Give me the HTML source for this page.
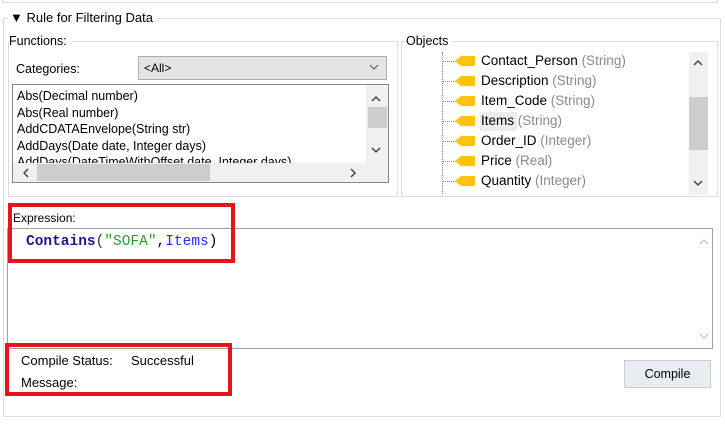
<!DOCTYPE html>
<html><head><style>
*{margin:0;padding:0;box-sizing:border-box}
body{width:725px;height:428px;background:#fff;position:relative;overflow:hidden;font-family:"Liberation Sans",sans-serif;font-size:12px;color:#000}
.a{position:absolute}
.t{position:absolute;white-space:nowrap;line-height:14px}
.g{color:#8a8a8a}
</style></head><body>
<div class="a" style="left:2px;top:-2px;width:716px;height:5px;border:1px solid #dcdcdc;border-top:none"></div>
<div class="a" style="left:3px;top:18px;width:718px;height:399px;border:1px solid #dcdcdc"></div>
<div class="t" style="left:8px;top:11px;background:#fff;padding:0 4px 0 2px;font-size:13px">▼ Rule for Filtering Data</div>

<div class="a" style="left:8px;top:41px;width:390px;height:156px;border:1px solid #dcdcdc"></div>
<div class="t" style="left:9px;top:34px;background:#fff;padding-right:4px;font-size:12.5px">Functions:</div>
<div class="t" style="left:16px;top:62px;font-size:12.5px">Categories:</div>
<div class="a" style="left:138px;top:56px;width:249px;height:24px;background:#e5e5e5;border:1px solid #adadad"></div>
<div class="t" style="left:144px;top:61px">&lt;All&gt;</div>
<svg class="a" style="left:369px;top:64px" width="10" height="7"><path d="M1 1l4 4 4-4" stroke="#555" fill="none"/></svg>
<div class="a" style="left:12px;top:84px;width:377px;height:99px;border:1px solid #828790;overflow:hidden">
<div class="t" style="left:4px;top:3px;line-height:16.5px;font-size:12.5px">Abs(Decimal number)<br>Abs(Real number)<br>AddCDATAEnvelope(String str)<br>AddDays(Date date, Integer days)<br>AddDays(DateTimeWithOffset date, Integer days)</div>
<div class="a" style="left:353px;top:0;width:22px;height:78px;background:#f0f0f0"></div>
<div class="a" style="left:355px;top:22px;width:19px;height:21px;background:#cdcdcd"></div>
<div class="a" style="left:0;top:78px;width:375px;height:19px;background:#f0f0f0"></div>
<div class="a" style="left:24px;top:79px;width:173px;height:17px;background:#cdcdcd"></div>
</div>
<svg class="a" style="left:371px;top:95px" width="10" height="7"><path d="M1 6l4-4 4 4" stroke="#444" stroke-width="1.5" fill="none"/></svg>
<svg class="a" style="left:371px;top:147px" width="10" height="7"><path d="M1 1l4 4 4-4" stroke="#444" stroke-width="1.5" fill="none"/></svg>
<svg class="a" style="left:22px;top:168px" width="7" height="10"><path d="M6 1l-4 4 4 4" stroke="#444" stroke-width="1.5" fill="none"/></svg>
<svg class="a" style="left:350px;top:168px" width="7" height="10"><path d="M1 1l4 4-4 4" stroke="#444" stroke-width="1.5" fill="none"/></svg>

<div class="a" style="left:401px;top:41px;width:317px;height:156px;border:1px solid #dcdcdc"></div>
<div class="t" style="left:406px;top:34px;background:#fff;padding-right:4px;font-size:12.5px">Objects</div>
<div class="a" style="left:442px;top:52px;height:142px;border-left:1px dotted #888"></div>
<div class="a" style="left:689px;top:52px;width:19px;height:143px;background:#f0f0f0"></div>
<div class="a" style="left:689px;top:97px;width:19px;height:53px;background:#cdcdcd"></div>
<svg class="a" style="left:693px;top:59px" width="10" height="7"><path d="M1 6l4-4 4 4" stroke="#444" stroke-width="1.5" fill="none"/></svg>
<svg class="a" style="left:693px;top:180px" width="10" height="7"><path d="M1 1l4 4 4-4" stroke="#444" stroke-width="1.5" fill="none"/></svg>
<div class="a" style="left:480px;top:112px;width:37px;height:19px;background:#ececec"></div>
<div class="a" style="left:443px;top:61px;width:13px;border-top:1px dotted #888"></div>
<div class="a" style="left:443px;top:81px;width:13px;border-top:1px dotted #888"></div>
<div class="a" style="left:443px;top:101px;width:13px;border-top:1px dotted #888"></div>
<div class="a" style="left:443px;top:121px;width:13px;border-top:1px dotted #888"></div>
<div class="a" style="left:443px;top:141px;width:13px;border-top:1px dotted #888"></div>
<div class="a" style="left:443px;top:161px;width:13px;border-top:1px dotted #888"></div>
<div class="a" style="left:443px;top:181px;width:13px;border-top:1px dotted #888"></div>
<svg class="a" style="left:455px;top:55px" width="22" height="140"><g fill="#ffc20e">
<path d="M0 6l6-5h14v10H6z"/><path d="M0 26l6-5h14v10H6z"/><path d="M0 46l6-5h14v10H6z"/><path d="M0 66l6-5h14v10H6z"/><path d="M0 86l6-5h14v10H6z"/><path d="M0 106l6-5h14v10H6z"/><path d="M0 126l6-5h14v10H6z"/></g></svg>
<div class="t" style="left:481px;top:54px;font-size:13.5px">Contact_Person <span class="g">(String)</span></div>
<div class="t" style="left:481px;top:74px;font-size:13.5px">Description <span class="g">(String)</span></div>
<div class="t" style="left:481px;top:94px;font-size:13.5px">Item_Code <span class="g">(String)</span></div>
<div class="t" style="left:481px;top:114px;font-size:13.5px">Items <span class="g">(String)</span></div>
<div class="t" style="left:481px;top:134px;font-size:13.5px">Order_ID <span class="g">(Integer)</span></div>
<div class="t" style="left:481px;top:154px;font-size:13.5px">Price <span class="g">(Real)</span></div>
<div class="t" style="left:481px;top:174px;font-size:13.5px">Quantity <span class="g">(Integer)</span></div>

<div class="t" style="left:13px;top:211px">Expression:</div>
<div class="a" style="left:7px;top:228px;width:706px;height:121px;border:1px solid #a0a0a0;background:#fff"></div>
<div class="t" style="left:26px;top:234px;font-family:'Liberation Mono',monospace;font-size:14.5px;font-weight:bold;line-height:16px"><span style="color:#1a1a8c">Contains</span><span style="color:#333;font-weight:normal">(</span><span style="color:#2e9a2e;font-weight:normal">"SOFA"</span><span style="font-weight:normal">,</span><span style="color:#2a2aff;font-weight:normal">Items</span><span style="font-weight:normal">)</span></div>
<svg class="a" style="left:699px;top:238px" width="10" height="7"><path d="M1 6l4-4 4 4" stroke="#bbb" fill="none"/></svg>
<svg class="a" style="left:699px;top:333px" width="10" height="7"><path d="M1 1l4 4 4-4" stroke="#bbb" fill="none"/></svg>
<div class="a" style="left:8px;top:203px;width:227px;height:60px;border:4px solid #e8141c"></div>

<div class="t" style="left:21px;top:354px;font-size:13px">Compile Status:</div>
<div class="t" style="left:131px;top:354px;font-size:13px">Successful</div>
<div class="t" style="left:21px;top:376px;font-size:13px">Message:</div>
<div class="a" style="left:5px;top:343px;width:227px;height:53px;border:4px solid #e8141c"></div>
<div class="a" style="left:624px;top:360px;width:87px;height:28px;background:#e8edf2;border:1px solid #c6ccd2;text-align:center;line-height:26px;font-size:12.5px">Compile</div>
</body></html>
